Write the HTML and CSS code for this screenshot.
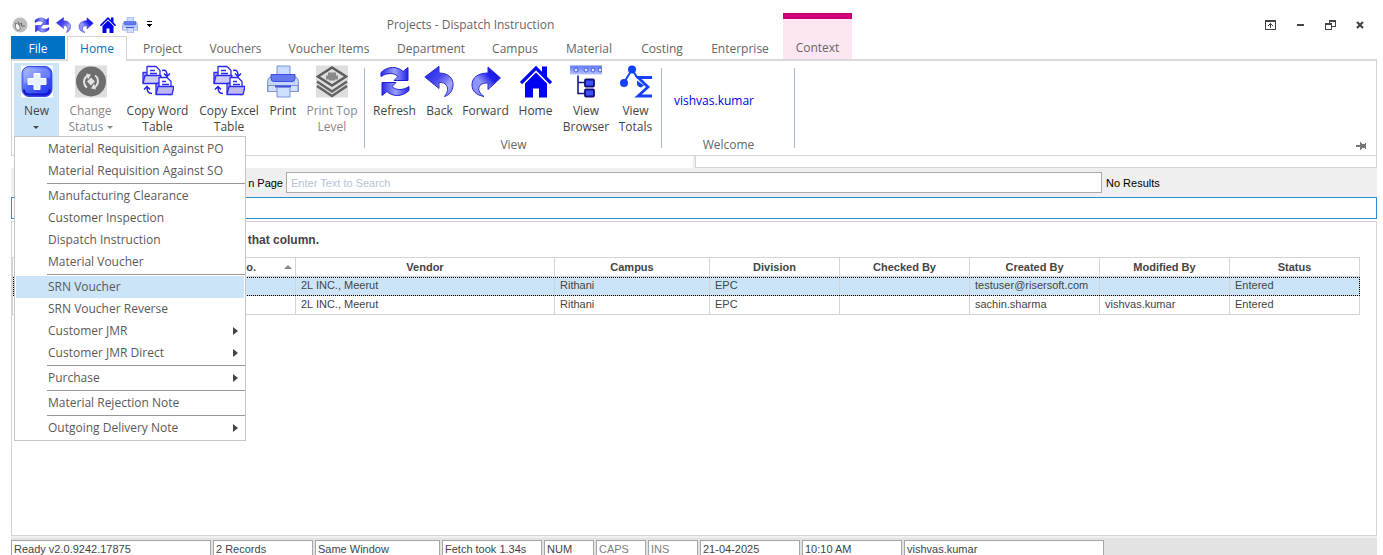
FILE: index.html
```html
<!DOCTYPE html>
<html lang="en">
<head>
<meta charset="utf-8">
<title>Projects - Dispatch Instruction</title>
<link rel="stylesheet" href="styles.css">
</head>
<body>
<svg class="defs" aria-hidden="true">
  <defs>
    <linearGradient id="gBack" x1="0" y1="0" x2="1" y2="1"><stop offset="0" stop-color="#1a1af0"/><stop offset=".45" stop-color="#4a4af0"/><stop offset=".75" stop-color="#a9abf8"/><stop offset="1" stop-color="#5c5ce8"/></linearGradient>
    <linearGradient id="gFwd" x1="0" y1="1" x2="1" y2="0"><stop offset="0" stop-color="#8a8cf4"/><stop offset=".4" stop-color="#8f97fa"/><stop offset=".65" stop-color="#2020ee"/><stop offset="1" stop-color="#1212e0"/></linearGradient>
    <linearGradient id="gNew" x1="0" y1="0" x2="1" y2="1"><stop offset="0" stop-color="#9fb4ff"/><stop offset=".45" stop-color="#4a66fb"/><stop offset="1" stop-color="#1c2cf0"/></linearGradient>
    <linearGradient id="gArc" x1="0" y1="0" x2="1" y2="0"><stop offset="0" stop-color="#2a2ae8"/><stop offset=".5" stop-color="#9aa0fa"/><stop offset="1" stop-color="#2424ea"/></linearGradient>
    <linearGradient id="gBar" x1="0" y1="0" x2="0" y2="1"><stop offset="0" stop-color="#5f78f2"/><stop offset=".5" stop-color="#8d9ffb"/><stop offset="1" stop-color="#b9c5ff"/></linearGradient>
  </defs>
  <symbol id="i-new" viewBox="0 0 32 32"><path fill="#fff" d="M0 0h32v32H0z"/><rect x="1" y="1" width="30" height="30" rx="7" fill="url(#gNew)" stroke="#3a4ce0"/><path d="M3 15V9q0-6 6-6h14q6 0 6 6v3Q16 13 3 18z" fill="#fff" opacity=".22"/><path d="M3 24q0 5 6 5h14q5 0 6-5" fill="none" stroke="#1414c8" stroke-width="2"/><path d="M13 8h6v5h6v6h-6v5h-6v-5H7v-6h6z" fill="#e8f2ff" stroke="#fff"/></symbol>
  <symbol id="i-status" viewBox="0 0 32 32"><path fill="#dedede" d="M0 0h32v32H0z"/><circle cx="16" cy="16" r="15" fill="#6e6e6e"/><path d="M13 10a7 7 0 0 0-1 12M19 22a7 7 0 0 0 1-12" fill="none" stroke="#e2e2e2" stroke-width="2"/><path d="M11 8l5 1-3 5zM21 24l-5-1 3-5zM12 16l4-4 4 4-4 4z" fill="#e2e2e2"/></symbol>
  <symbol id="i-copy" viewBox="0 0 32 32"><g stroke="#2a2af0" stroke-width="1.3" stroke-linejoin="round"><path d="M1 17V7h4l2 3h10v8z" fill="#b4b0f4"/><path d="M5 12V1h9l4 4v8H5z" fill="#fff"/><path d="M8 5h5M8 8h7" fill="none"/><path d="M1 18l2-8h16l-2 8z" fill="#cfcbfa"/><path d="M14 28V18h3l2 3h10v8z" fill="#b4b0f4"/><path d="M17 23V12h8l4 4v8H17z" fill="#fff"/><path d="M20 16h4M20 19h7" fill="none"/><path d="M14 29l2-8h16l-2 8z" fill="#bdb8f4"/></g><path d="M20 5c4-1 5 1 5 5M22 8l3 3 3-3M10 28c-4 0-5-2-5-6M2 24l3-3 3 3" fill="none" stroke="#2020f0" stroke-width="1.5"/></symbol>
  <symbol id="i-print" viewBox="0 0 32 32"><g stroke="#7d92dc"><path d="M10 .5h13V12H10z" fill="#c9dcff"/><path d="M.5 16q0-4 4-5h23q4 1 4 5v10H.5z" fill="#c3d5ff"/><path d="M1 20h30v6H1z" fill="#d5e0ff"/><path d="M4 9h24v4q0 3-3 3H7q-3 0-3-3z" fill="#6478f0" stroke="#3c4cdc"/><path d="M8 21h16" stroke="#3c4cdc" stroke-width="2"/><path d="M10 22h13v9.500H10z" fill="#cfe0ff"/></g></symbol>
  <symbol id="i-layers" viewBox="0 0 32 32"><path fill="#dedede" d="M0 0h32v32H0z"/><path d="M2 11L16 2l14 9-14 9z" fill="#dedede" stroke="#5c5c5c" stroke-width="2.400"/><path d="M1 16l15 10 15-10M1 20.500l15 10 15-10" fill="none" stroke="#646464" stroke-width="2.600"/><path d="M12 7h8v3h2v4h-3v1h-6v-1h-3v-4h2z" fill="#888"/></symbol>
  <symbol id="i-refresh" viewBox="0 0 32 32"><g stroke="#2020d0" stroke-width="1"><path d="M2 11V7C9 0 19 1 24 6l5-4v13H15l4-4C15 7 8 7 2 11z" fill="url(#gArc)"/><path d="M30 21v4C23 32 13 31 8 26l-5 4V17h14l-4 4c4 4 11 4 17 0z" fill="url(#gArc)"/></g></symbol>
  <symbol id="i-back" viewBox="0 0 32 32"><path d="M.8 11.500L15 .8v6.700c10 0 15 6 14 13-.5 5-3.500 9-8.500 10.500 3-4 4-8 2-11-1.500-2.500-4-3-7.500-3v6z" fill="url(#gBack)" stroke="#3030c8"/></symbol>
  <symbol id="i-fwd" viewBox="0 0 32 32"><path d="M30.500 12.500L18 1.500v6C8 7.500 2 12 2 19.500c0 6 4 10 12 11.500-4-3-6-6-5-9 1-3.500 4-4.500 9-4.500V24z" fill="url(#gFwd)" stroke="#2a2ad0"/></symbol>
  <symbol id="i-home" viewBox="0 0 32 32"><path d="M5 18L16 7l11 11v14h-8v-9h-6v9H5z" fill="#0000f4"/><path d="M1 17.500L16 2.500l15 15" fill="none" stroke="#0000f4" stroke-width="3.200"/><path d="M22 1h5v11l-5-5z" fill="#0000f4"/></symbol>
  <symbol id="i-browser" viewBox="0 0 32 32"><path d="M0 0h32v9H0z" fill="url(#gBar)"/><g fill="#dfe6ff" stroke="#4257e8"><circle cx="6" cy="4.500" r="2"/><circle cx="16" cy="4.500" r="2"/><circle cx="23" cy="4.500" r="2"/><circle cx="30" cy="4.500" r="2"/></g><path d="M8 10v18h8M8 17h8" fill="none" stroke="#16168c" stroke-width="1.600"/><g fill="#3c50ff" stroke="#101078" stroke-width="1.800"><rect x="15" y="14" width="9" height="7" rx="1"/><rect x="15" y="24" width="9" height="7" rx="1"/></g></symbol>
  <symbol id="i-totals" viewBox="0 0 32 32"><g fill="#1440ff"><circle cx="12" cy="4" r="4"/><circle cx="4" cy="17.500" r="4"/><path d="M17 15l7 5-3 2q-4-1-4-4z"/></g><path d="M4 17l8-13 6 9" fill="none" stroke="#1440ff" stroke-width="2"/><path d="M32 12H18l10 9.500L18 30.500h14" fill="none" stroke="#1440ff" stroke-width="2.800"/></symbol>
  <symbol id="i-app" viewBox="0 0 32 32"><circle cx="16" cy="16" r="15" fill="#bdbdbd"/><path d="M7 12l7 3 3 9-6 3-4-6z" fill="#f4f4f4" stroke="#666" stroke-width="1.500"/><path d="M12 9l3 6 4-3v6h7" fill="none" stroke="#666" stroke-width="2"/></symbol>
</svg>

<div class="app">
  <header class="titlebar">
    <div class="qat">
      <button aria-label="Status"><svg><use href="#i-app"/></svg></button>
      <button aria-label="Refresh"><svg><use href="#i-refresh"/></svg></button>
      <button aria-label="Back"><svg><use href="#i-back"/></svg></button>
      <button aria-label="Forward"><svg><use href="#i-fwd"/></svg></button>
      <button aria-label="Home"><svg><use href="#i-home"/></svg></button>
      <button aria-label="Print"><svg><use href="#i-print"/></svg></button>
      <button aria-label="Customize toolbar"><svg viewBox="0 0 16 16" shape-rendering="crispEdges"><path d="M3 4h5v1H3zM3 7h5v1H3zM4 8h3v1H4zM5 9h1v1H5z" fill="#000"/></svg></button>
    </div>
    <h1 class="title">Projects - Dispatch Instruction</h1>
    <div class="window-controls">
      <button aria-label="Ribbon display options"><svg viewBox="0 0 11 10" width="11" height="10" shape-rendering="crispEdges"><path d="M0 0h11v10H0zM1 2v7h9V2z" fill="#444" fill-rule="evenodd"/><path d="M5 3h1v5H5zM4 4h3v1H4zM3 5h1v1H3zM7 5h1v1H7z" fill="#444"/></svg></button>
      <button aria-label="Minimize"><svg viewBox="0 0 7 10" width="7" height="10" shape-rendering="crispEdges"><path d="M0 4h7v2H0z" fill="#444"/></svg></button>
      <button aria-label="Restore"><svg viewBox="0 0 11 10" width="11" height="10" shape-rendering="crispEdges"><path d="M4 0h7v7H7V6h3V2H5v1H4zM0 3h7v7H0zM1 5v4h5V5z" fill="#444" fill-rule="evenodd"/></svg></button>
      <button aria-label="Close"><svg viewBox="0 0 8 8" width="8" height="10"><path d="M1 1l6 6M7 1L1 7" stroke="#444" stroke-width="2.200"/></svg></button>
    </div>
  </header>

  <nav class="tabs">
    <button class="tab tab-file">File</button>
    <button class="tab tab-active">Home</button>
    <button class="tab">Project</button>
    <button class="tab">Vouchers</button>
    <button class="tab">Voucher Items</button>
    <button class="tab">Department</button>
    <button class="tab">Campus</button>
    <button class="tab">Material</button>
    <button class="tab">Costing</button>
    <button class="tab">Enterprise</button>
    <button class="tab tab-context">Context</button>
  </nav>

  <section class="ribbon">
    <div class="group group-edit">
      <div class="tools">
        <div class="split">
          <button class="tool tool-open" aria-haspopup="menu" aria-expanded="true"><svg><use href="#i-new"/></svg><span>New<br><i class="caret"></i></span></button>
          <div class="menu" role="menu">
            <button role="menuitem">Material Requisition Against PO</button>
            <button role="menuitem">Material Requisition Against SO</button>
            <hr>
            <button role="menuitem">Manufacturing Clearance</button>
            <button role="menuitem">Customer Inspection</button>
            <button role="menuitem">Dispatch Instruction</button>
            <button role="menuitem">Material Voucher</button>
            <hr>
            <button role="menuitem" class="hot">SRN Voucher</button>
            <button role="menuitem">SRN Voucher Reverse</button>
            <button role="menuitem" class="sub">Customer JMR</button>
            <button role="menuitem" class="sub">Customer JMR Direct</button>
            <hr>
            <button role="menuitem" class="sub">Purchase</button>
            <hr>
            <button role="menuitem">Material Rejection Note</button>
            <hr>
            <button role="menuitem" class="sub">Outgoing Delivery Note</button>
          </div>
        </div>
        <button class="tool" disabled><svg><use href="#i-status"/></svg><span>Change<br>Status <i class="caret"></i></span></button>
        <button class="tool"><svg><use href="#i-copy"/></svg><span>Copy Word<br>Table</span></button>
        <button class="tool"><svg><use href="#i-copy"/></svg><span>Copy Excel<br>Table</span></button>
        <button class="tool"><svg><use href="#i-print"/></svg><span>Print</span></button>
        <button class="tool" disabled><svg><use href="#i-layers"/></svg><span>Print Top<br>Level</span></button>
      </div>
    </div>
    <div class="group group-view">
      <div class="tools">
        <button class="tool"><svg><use href="#i-refresh"/></svg><span>Refresh</span></button>
        <button class="tool"><svg><use href="#i-back"/></svg><span>Back</span></button>
        <button class="tool"><svg><use href="#i-fwd"/></svg><span>Forward</span></button>
        <button class="tool"><svg><use href="#i-home"/></svg><span>Home</span></button>
        <button class="tool"><svg><use href="#i-browser"/></svg><span>View<br>Browser</span></button>
        <button class="tool"><svg><use href="#i-totals"/></svg><span>View<br>Totals</span></button>
      </div>
      <div class="group-label">View</div>
    </div>
    <div class="group group-user">
      <div class="user">vishvas.kumar</div>
      <div class="group-label">Welcome</div>
    </div>
    <button class="pin" aria-label="Pin the ribbon"><svg viewBox="0 0 10 8" width="10" height="8" shape-rendering="crispEdges"><path d="M0 3h4V0h1v1h1v1h3V1h1v6H9V6H6v1H5v1H4V5H0z" fill="#777"/></svg></button>
  </section>

  <div class="strip"><div class="strip-left"></div><div class="strip-right"></div></div>

  <form class="search">
    <label for="find">n Page</label>
    <input id="find" type="text" placeholder="Enter Text to Search">
    <output for="find">No Results</output>
  </form>
  <input class="filter" type="text" aria-label="Filter">

  <main class="grid">
    <div class="group-hint">that column.</div>
    <table>
      <colgroup><col class="c-no"><col><col class="c-campus"><col class="c-std"><col class="c-std"><col class="c-std"><col class="c-std"><col class="c-std"></colgroup>
      <thead>
        <tr><th class="sorted"><span>o.<i></i></span></th><th>Vendor</th><th>Campus</th><th>Division</th><th>Checked By</th><th>Created By</th><th>Modified By</th><th>Status</th></tr>
      </thead>
      <tbody>
        <tr class="selected"><td></td><td>2L INC., Meerut</td><td>Rithani</td><td>EPC</td><td></td><td>testuser@risersoft.com</td><td></td><td>Entered</td></tr>
        <tr><td></td><td>2L INC., Meerut</td><td>Rithani</td><td>EPC</td><td></td><td>sachin.sharma</td><td>vishvas.kumar</td><td>Entered</td></tr>
      </tbody>
    </table>
  </main>

  <footer class="statusbar">
    <span>Ready v2.0.9242.17875</span><span>2 Records</span><span>Same Window</span><span>Fetch took 1.34s</span><span>NUM</span><span class="off">CAPS</span><span class="off">INS</span><span>21-04-2025</span><span>10:10 AM</span><span>vishvas.kumar</span>
  </footer>
</div>
</body>
</html>
```
FILE: styles.css
```css
:root {
  --ui: "Open Sans", "Noto Sans", sans-serif;
  --data: "Liberation Sans", Arial, sans-serif;
  --line: #d4d4d4;
  --hot: #cce4f7;
}
* { box-sizing: border-box; }
body {
  margin: 0;
  height: 100vh;
  overflow: hidden;
  background: #fff;
  color: #444;
  font: 12px/16px var(--ui);
}
button {
  margin: 0;
  padding: 0;
  border: 0;
  background: none;
  color: inherit;
  font: inherit;
}
.defs { position: absolute; width: 0; height: 0; }
.app {
  display: flex;
  flex-direction: column;
  height: 100%;
  padding: 13px 6px 0 11px;
}

/* Title bar */
.titlebar {
  display: grid;
  grid-template-columns: 147px 625px 1fr;
  align-items: center;
  height: 23px;
  flex: none;
}
.qat { display: flex; gap: 6px; padding-left: 1px; }
.qat button, .qat svg { display: block; width: 16px; height: 16px; }
.title {
  margin: 0;
  font-size: 12px;
  font-weight: 400;
  text-align: center;
  color: #666;
}
.window-controls { display: flex; justify-content: flex-end; padding-right: 2px; }
.window-controls button {
  display: flex;
  align-items: center;
  justify-content: center;
  width: 30px;
  height: 22px;
}

/* Tabs */
.tabs {
  display: grid;
  grid-template-columns: 56px 62px 67px 79px 108px 96px 72px 76px 70px 86px 69px;
  height: 23px;
  flex: none;
}
.tab { color: #666; }
.tab-file { width: 54px; background: #0072c6; color: #fff; }
.tab-active {
  width: 60px;
  height: 25px;
  z-index: 1;
  background: #fff;
  border: 1px solid var(--line);
  border-bottom: 0;
  color: #0072c6;
}
.tab-context {
  height: 46px;
  margin-top: -23px;
  padding-top: 18px;
  background: #fbe6f1;
  border-top: 6px solid #cc0077;
}

/* Ribbon */
.ribbon {
  display: flex;
  flex: none;
  height: 97px;
  border: 1px solid var(--line);
  border-top: 2px solid #d9d9d9;
}
.group { position: relative; display: flex; flex-direction: column; padding-top: 2px; }
.group::after {
  content: "";
  position: absolute;
  top: 7px;
  right: 0;
  width: 1px;
  height: 80px;
  background: #a5b7d2;
}
.group-edit { width: 353px; padding-left: 2px; }
.group-view { width: 297px; padding: 2px 6px 0 6px; }
.group-user { width: 133px; }
.tools { display: grid; height: 73px; }
.group-edit .tools { grid-template-columns: 48px 57px 77px 66px 42px 56px; }
.group-view .tools { grid-template-columns: 47px 43px 49px 51px 50px 49px; }
.tool {
  display: flex;
  flex-direction: column;
  align-items: center;
  gap: 5px;
  height: 73px;
  padding-top: 2px;
  white-space: nowrap;
}
.tool svg { width: 32px; height: 33px; flex: none; }
.tool:disabled { color: #888; }
.tool-open { width: 45px; background: var(--hot); }
.caret {
  display: inline-block;
  vertical-align: middle;
  border: 3px solid transparent;
  border-top-color: currentColor;
  border-bottom: 0;
}
.group-label { padding-top: 1px; text-align: center; color: #666; }
.user { height: 73px; padding: 30px 0 0 12px; color: #0000e6; }
.pin { align-self: flex-end; margin: 0 10px 5px auto; line-height: 0; }

/* Drop-down menu */
.split { position: relative; }
.menu {
  position: absolute;
  top: 73px;
  left: 0;
  z-index: 10;
  width: 232px;
  padding: 1px;
  background: #fff;
  border: 1px solid #c6c6c6;
}
.menu button {
  display: flex;
  align-items: center;
  justify-content: space-between;
  width: 100%;
  height: 22px;
  padding: 0 6px 0 32px;
  color: #5a5a5a;
}
.menu .hot { background: var(--hot); }
.menu .sub::after {
  content: "";
  border: 4px solid transparent;
  border-left: 5px solid #444;
  border-right: 0;
}
.menu hr { height: 1px; margin: 1px -1px 1px 31px; border: 0; background: #999; }

/* Strip and search */
.strip { display: flex; flex: none; height: 12px; background: #efefef; }
.strip-left { width: 682px; background: #fff; }
.strip-right {
  flex: 1;
  margin-left: 2px;
  background: #fff;
  border: 1px solid var(--line);
  border-top: 0;
}
.search {
  display: flex;
  align-items: center;
  flex: none;
  height: 29px;
  background: #efefef;
  color: #000;
  font: 11px/14px var(--data);
}
.search label { width: 272px; text-align: right; }
.search input {
  flex: 1;
  height: 21px;
  margin: 0 4px 0 3px;
  padding: 0 4px;
  border: 1px solid #ababab;
  font: inherit;
}
.search input::placeholder { color: #b4c3d6; }
.search output { width: 271px; }
.filter {
  flex: none;
  width: 100%;
  height: 22px;
  border: 1px solid #2a8dd4;
}

/* Data grid */
.grid {
  flex: 1;
  min-height: 0;
  margin-top: 2px;
  padding-right: 16px;
  border: 1px solid var(--line);
  font: 11px/14px var(--data);
}
.group-hint {
  width: 307px;
  height: 35px;
  padding-top: 11px;
  font-size: 12px;
  font-weight: 700;
  text-align: right;
  white-space: nowrap;
}
table { width: 100%; table-layout: fixed; border-collapse: collapse; }
.c-no { width: 283px; }
.c-campus { width: 155px; }
.c-std { width: 130px; }
th, td {
  height: 19px;
  padding: 0 5px;
  border: 1px solid var(--line);
  white-space: nowrap;
}
td { padding-bottom: 2px; text-align: left; }
.sorted span { display: flex; justify-content: flex-end; align-items: center; gap: 28px; }
.sorted i { border: 4px solid transparent; border-bottom-color: #888; border-top: 0; margin-right: -2px; }
.selected { background: var(--hot); outline: 1px dotted #000; outline-offset: -1px; }

/* Status bar */
.statusbar {
  display: grid;
  grid-template-columns: 200px 100px 125px 100px 50px 50px 50px 100px 100px 200px;
  gap: 2px;
  flex: none;
  height: 19px;
  padding-top: 2px;
  background: #e3e3e3;
  border-top: 2px solid #f0f0f0;
  font: 11px/17px var(--data);
}
.statusbar span {
  padding-left: 2px;
  background: #fff;
  border: 1px solid #a6a6a6;
  border-bottom: 0;
  white-space: nowrap;
}
.statusbar .off { color: #808080; }
```
